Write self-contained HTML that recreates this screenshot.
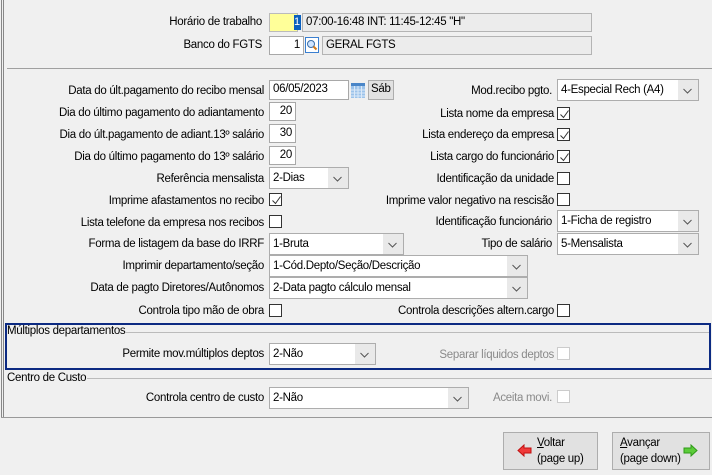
<!DOCTYPE html>
<html><head><meta charset="utf-8"><style>
*{box-sizing:border-box;margin:0;padding:0}
body{width:712px;height:475px;background:#f0f0f0;font-family:"Liberation Sans",sans-serif;font-size:11.5px;color:#000;position:relative;overflow:hidden;letter-spacing:-0.3px}
.a{position:absolute}
.l{position:absolute;text-align:right;white-space:nowrap;line-height:14px}
.in{position:absolute;background:#fff;border:1px solid #a8a8a8;line-height:17px;padding:0 3px;white-space:nowrap}
.ro{position:absolute;background:#ececec;border:1px solid #b4b4b4;line-height:17px;padding:0 3px;white-space:nowrap}
.cb{position:absolute;width:13px;height:13px;border:1px solid #333;background:#fff}
.cb.d{border-color:#ccc}
.cb svg{position:absolute;left:1px;top:1px}
.co{position:absolute;background:#fff;border:1px solid #adadad;line-height:20px;padding:0 3px;white-space:nowrap}
.co::after{content:"";position:absolute;right:0;top:0;bottom:0;width:20px;background:#e9e9e9}
.co svg{position:absolute;right:6px;top:8px;z-index:2}
.btn{position:absolute;background:#e1e1e1;border:1px solid #adadad;line-height:16px}
</style></head><body>
<div class="a" style="left:1px;top:0;width:1px;height:418px;background:#888"></div>
<div class="a" style="left:3px;top:0;width:1px;height:418px;background:#888"></div>
<div class="a" style="left:1px;top:417px;width:711px;height:1px;background:#999"></div>
<div class="a" style="left:7px;top:68px;width:705px;height:1px;background:#a0a0a0"></div>

<div class="l" style="right:450px;top:15px">Horário de trabalho</div>
<div class="a" style="left:269px;top:13px;width:29px;height:19px;background:#ffff99;border:1px solid #bbb"></div>
<div class="a" style="left:294px;top:15px;width:7px;height:15px;background:#0a5fbd;color:#fff;line-height:15px;font-size:11px">1</div>
<div class="ro" style="left:302px;top:13px;width:290px;height:19px">07:00-16:48 INT: 11:45-12:45 "H"</div>
<div class="l" style="right:450px;top:38px">Banco do FGTS</div>
<div class="in" style="left:269px;top:36px;width:35px;height:19px;text-align:right">1</div>
<svg class="a" style="left:305px;top:37px" width="14" height="16"><rect x="0.5" y="0.5" width="13" height="15" fill="#fff" stroke="#3a7fd0"/><circle cx="6" cy="7" r="3.5" fill="#cfe4ff" stroke="#3a6ea8"/><path d="M8.5 9.5l3 3" stroke="#d47a1a" stroke-width="2"/></svg>
<div class="ro" style="left:322px;top:36px;width:270px;height:19px">GERAL FGTS</div>

<div class="l" style="right:448px;top:84px">Data do últ.pagamento do recibo mensal</div>
<div class="in" style="left:269px;top:80px;width:80px;height:20px">06/05/2023</div>
<svg class="a" style="left:351px;top:83px" width="14" height="15"><rect x="0" y="0" width="14" height="3" fill="#4a86c8"/><rect x="0" y="3" width="14" height="12" fill="#9cc3ea"/><path d="M0 7h14M0 10h14M0 13h14M3.5 3v12M7 3v12M10.5 3v12" stroke="#dbe9f8" stroke-width="1"/></svg>
<div class="btn" style="left:368px;top:80px;width:26px;height:20px;padding-left:2px">Sáb</div>
<div class="l" style="right:160px;top:84px">Mod.recibo pgto.</div>
<div class="co" style="left:557px;top:79px;width:142px;height:22px">4-Especial Rech (A4)<svg width="9" height="6"><path d="M0.5 1l4 4 4-4" stroke="#555" fill="none"/></svg></div>

<div class="l" style="right:448px;top:106px">Dia do último pagamento do adiantamento</div>
<div class="in" style="left:269px;top:102px;width:27px;height:19px;text-align:right">20</div>
<div class="l" style="right:448px;top:128px">Dia do últ.pagamento de adiant.13º salário</div>
<div class="in" style="left:269px;top:124px;width:27px;height:19px;text-align:right">30</div>
<div class="l" style="right:448px;top:150px">Dia do último pagamento do 13º salário</div>
<div class="in" style="left:269px;top:146px;width:27px;height:19px;text-align:right">20</div>
<div class="l" style="right:448px;top:172px">Referência mensalista</div>
<div class="co" style="left:269px;top:167px;width:80px;height:22px">2-Dias<svg width="9" height="6"><path d="M0.5 1l4 4 4-4" stroke="#555" fill="none"/></svg></div>

<div class="l" style="right:158px;top:107px">Lista nome da empresa</div>
<div class="cb" style="left:557px;top:107px"><svg width="11" height="11"><path d="M1.5 5.5l3 3 5-7" stroke="#333" fill="none"/></svg></div>
<div class="l" style="right:158px;top:128px">Lista endereço da empresa</div>
<div class="cb" style="left:557px;top:128px"><svg width="11" height="11"><path d="M1.5 5.5l3 3 5-7" stroke="#333" fill="none"/></svg></div>
<div class="l" style="right:158px;top:150px">Lista cargo do funcionário</div>
<div class="cb" style="left:557px;top:150px"><svg width="11" height="11"><path d="M1.5 5.5l3 3 5-7" stroke="#333" fill="none"/></svg></div>
<div class="l" style="right:158px;top:172px">Identificação da unidade</div>
<div class="cb" style="left:557px;top:172px"></div>

<div class="l" style="right:448px;top:194px">Imprime afastamentos no recibo</div>
<div class="cb" style="left:269px;top:193px"><svg width="11" height="11"><path d="M1.5 5.5l3 3 5-7" stroke="#333" fill="none"/></svg></div>
<div class="l" style="right:158px;top:194px">Imprime valor negativo na rescisão</div>
<div class="cb" style="left:557px;top:193px"></div>
<div class="l" style="right:448px;top:216px">Lista telefone da empresa nos recibos</div>
<div class="cb" style="left:269px;top:215px"></div>
<div class="l" style="right:160px;top:215px">Identificação funcionário</div>
<div class="co" style="left:557px;top:210px;width:142px;height:22px">1-Ficha de registro<svg width="9" height="6"><path d="M0.5 1l4 4 4-4" stroke="#555" fill="none"/></svg></div>
<div class="l" style="right:448px;top:237px">Forma de listagem da base do IRRF</div>
<div class="co" style="left:269px;top:233px;width:135px;height:22px">1-Bruta<svg width="9" height="6"><path d="M0.5 1l4 4 4-4" stroke="#555" fill="none"/></svg></div>
<div class="l" style="right:160px;top:237px">Tipo de salário</div>
<div class="co" style="left:557px;top:233px;width:142px;height:22px">5-Mensalista<svg width="9" height="6"><path d="M0.5 1l4 4 4-4" stroke="#555" fill="none"/></svg></div>
<div class="l" style="right:448px;top:259px">Imprimir departamento/seção</div>
<div class="co" style="left:269px;top:255px;width:259px;height:22px">1-Cód.Depto/Seção/Descrição<svg width="9" height="6"><path d="M0.5 1l4 4 4-4" stroke="#555" fill="none"/></svg></div>
<div class="l" style="right:448px;top:281px">Data de pagto Diretores/Autônomos</div>
<div class="co" style="left:269px;top:277px;width:259px;height:22px">2-Data pagto cálculo mensal<svg width="9" height="6"><path d="M0.5 1l4 4 4-4" stroke="#555" fill="none"/></svg></div>
<div class="l" style="right:448px;top:304px">Controla tipo mão de obra</div>
<div class="cb" style="left:269px;top:304px"></div>
<div class="l" style="right:158px;top:304px">Controla descrições altern.cargo</div>
<div class="cb" style="left:557px;top:304px"></div>

<div class="a" style="left:5px;top:323px;width:706px;height:47px;border:2px solid #0c2a82"></div>
<div class="a" style="left:7px;top:325px;line-height:13px">Múltiplos departamentos</div>
<div class="a" style="left:125px;top:332px;width:584px;height:1px;background:#bbb"></div>
<div class="l" style="right:448px;top:347px">Permite mov.múltiplos deptos</div>
<div class="co" style="left:269px;top:343px;width:107px;height:22px">2-Não<svg width="9" height="6"><path d="M0.5 1l4 4 4-4" stroke="#555" fill="none"/></svg></div>
<div class="l" style="right:158px;top:348px;color:#8a8a8a">Separar líquidos deptos</div>
<div class="cb d" style="left:557px;top:347px"></div>

<div class="a" style="left:7px;top:372px;line-height:13px">Centro de Custo</div>
<div class="a" style="left:87px;top:378px;width:625px;height:1px;background:#bbb"></div>
<div class="l" style="right:448px;top:391px">Controla centro de custo</div>
<div class="co" style="left:269px;top:387px;width:200px;height:22px">2-Não<svg width="9" height="6"><path d="M0.5 1l4 4 4-4" stroke="#555" fill="none"/></svg></div>
<div class="l" style="right:160px;top:391px;color:#8a8a8a">Aceita movi.</div>
<div class="cb d" style="left:557px;top:390px"></div>

<div class="btn" style="left:503px;top:432px;width:95px;height:38px"></div>
<svg class="a" style="left:517px;top:444px" width="15" height="13"><path d="M1 6.5L7 1v3h7v5H7v3z" fill="#f03a3a" stroke="#c01010"/></svg>
<div class="a" style="left:537px;top:435px;line-height:16px"><u>V</u>oltar<br>(page up)</div>
<div class="btn" style="left:612px;top:432px;width:98px;height:38px"></div>
<div class="a" style="left:620px;top:435px;line-height:16px"><u>A</u>vançar<br>(page down)</div>
<svg class="a" style="left:683px;top:444px" width="15" height="13"><path d="M14 6.5L8 1v3H1v5h7v3z" fill="#5ccc3a" stroke="#2e9a18"/></svg>
</body></html>
